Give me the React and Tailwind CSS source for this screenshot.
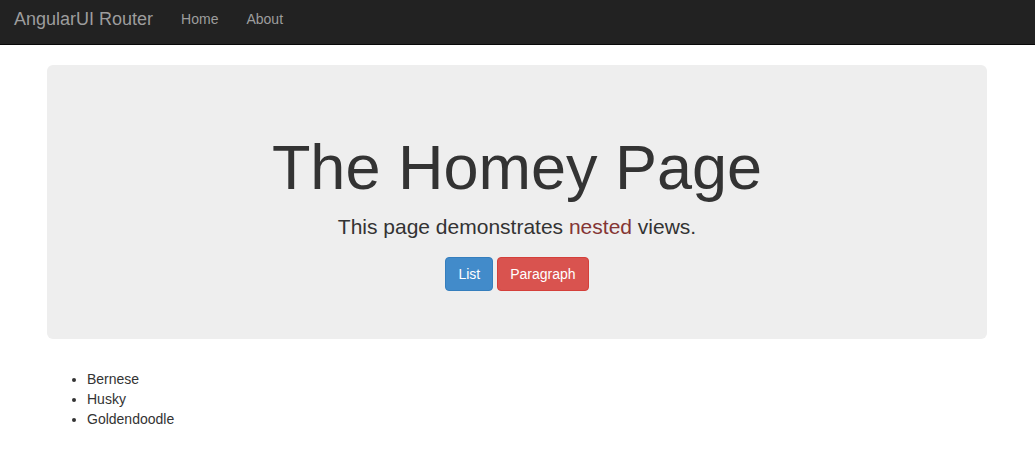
import React from 'react';

const dogs = ['Bernese', 'Husky', 'Goldendoodle'];

const App = () => {
  return (
    <div className="min-h-[457px] bg-white text-[#333] text-[14px] leading-[20px] font-['Liberation_Sans',Arial,sans-serif]">
      {/* Navbar */}
      <nav className="flex items-center h-[45px] bg-[#222] border-b border-[#080808]">
        <a href="#" className="pl-[14px] pr-[14px] text-[18px] leading-[20px] text-[#9d9d9d] pb-[6px]">
          AngularUI Router
        </a>
        <ul className="flex">
          <li>
            <a href="#" className="block px-[14px] text-[#9d9d9d] pb-[6px]">Home</a>
          </li>
          <li>
            <a href="#" className="block px-[14px] text-[#9d9d9d] pb-[6px]">About</a>
          </li>
        </ul>
      </nav>

      <div className="w-[970px] ml-[32px] px-[15px] pt-[20px]">
        {/* Jumbotron */}
        <div className="bg-[#eee] rounded-[6px] py-[48px] px-[60px] mb-[30px] text-center">
          <h1 className="mt-[20px] mb-[10px] text-[63px] leading-[1.1] font-normal">The Homey Page</h1>
          <p className="mb-[15px] text-[21px] leading-[30px]">
            This page demonstrates <span className="text-[#843534]">nested</span> views.
          </p>
          <div className="flex justify-center gap-[4px]">
            <a href="#" className="inline-block px-[12px] py-[6px] rounded-[4px] border border-[#357ebd] bg-[#428bca] text-white">
              List
            </a>
            <a href="#" className="inline-block px-[12px] py-[6px] rounded-[4px] border border-[#d43f3a] bg-[#d9534f] text-white">
              Paragraph
            </a>
          </div>
        </div>

        <ul className="list-disc pl-[40px]">
          {dogs.map((dog) => (
            <li key={dog}>{dog}</li>
          ))}
        </ul>
      </div>
    </div>
  );
};

export default App;
